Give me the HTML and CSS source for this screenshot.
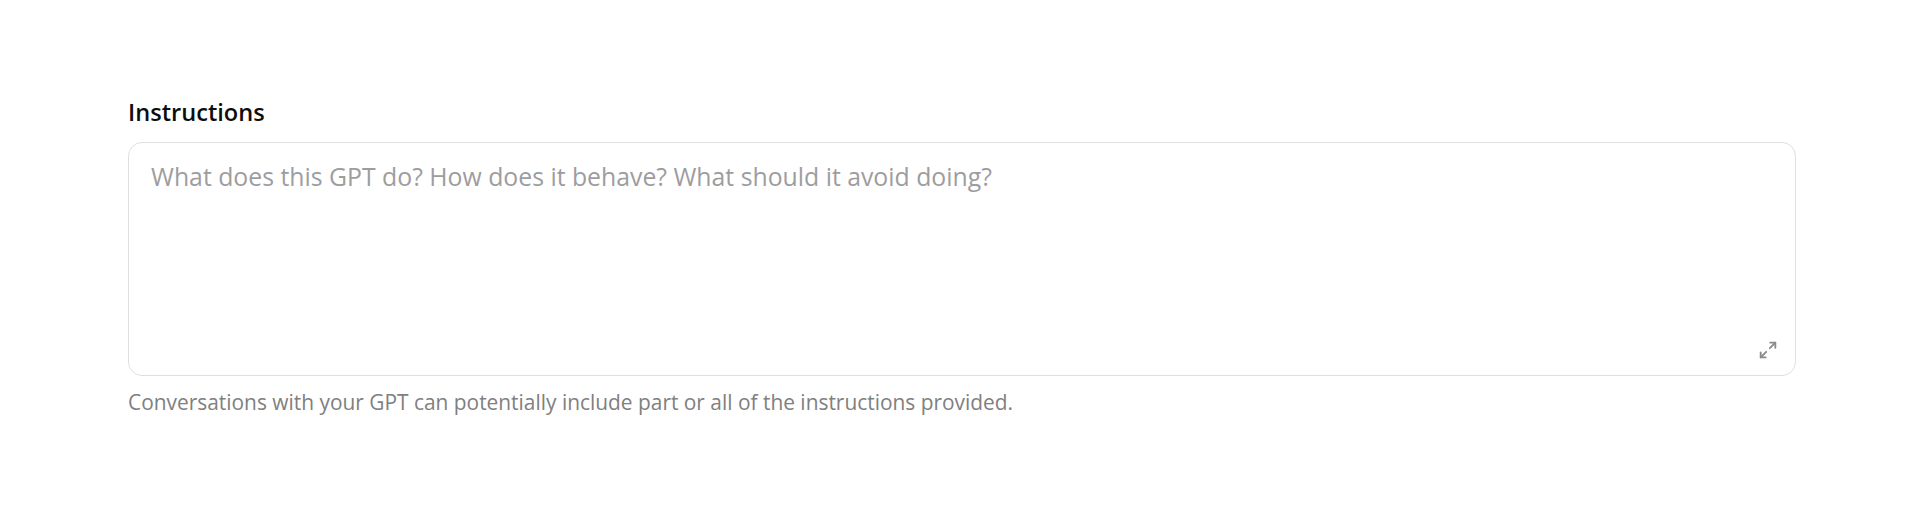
FILE: index.html
```html
<!DOCTYPE html>
<html lang="en">
<head>
<meta charset="utf-8">
<title>Configure GPT</title>
<link rel="stylesheet" href="styles.css">
</head>
<body>
  <main class="page">
    <div class="field">
      <label class="field-label" for="instructions">Instructions</label>
      <div class="textarea-wrap">
        <textarea id="instructions" class="textarea" placeholder="What does this GPT do? How does it behave? What should it avoid doing?"></textarea>
        <button class="expand-btn" type="button" aria-label="Expand">
          <svg viewBox="0 0 24 24" width="22" height="22" fill="none" stroke="currentColor" stroke-width="2" stroke-linecap="round" stroke-linejoin="round">
            <path d="M14 10 L20 4"/>
            <path d="M14.5 4 H20 V9.5"/>
            <path d="M10 14 L4 20"/>
            <path d="M4 14.5 V20 H9.5"/>
          </svg>
        </button>
      </div>
      <p class="field-hint">Conversations with your GPT can potentially include part or all of the instructions provided.</p>
    </div>
  </main>
</body>
</html>
```
FILE: styles.css
```css
* {
  box-sizing: border-box;
}

html, body {
  margin: 0;
  background: #ffffff;
}

body {
  font-family: "Open Sans", "Noto Sans", Arial, sans-serif;
  color: #0d0d0d;
}

.page {
  padding: 96px 124px 0 128px;
}

.field {
  display: flex;
  flex-direction: column;
}

.field-label {
  font-size: 23.6px;
  line-height: 32px;
  font-weight: 600;
  color: #0d0d0d;
  margin-bottom: 14px;
}

.textarea-wrap {
  position: relative;
  height: 234px;
  border: 1px solid #e0e0e0;
  border-radius: 14px;
  background: #fff;
}

.textarea {
  display: block;
  width: 100%;
  height: 100%;
  resize: none;
  border: 0;
  outline: none;
  background: transparent;
  padding: 15px 22px 14px;
  font-family: inherit;
  font-size: 24.8px;
  line-height: 36px;
  color: #0d0d0d;
}

.textarea::placeholder {
  color: #9d9d9f;
  opacity: 1;
}

.expand-btn {
  position: absolute;
  right: 14px;
  bottom: 12px;
  width: 26px;
  height: 26px;
  padding: 0;
  border: 0;
  background: transparent;
  color: #8a8a8a;
  display: flex;
  align-items: center;
  justify-content: center;
}

.field-hint {
  margin: 12px 0 0;
  font-size: 20.9px;
  line-height: 28px;
  color: #808080;
}
```
